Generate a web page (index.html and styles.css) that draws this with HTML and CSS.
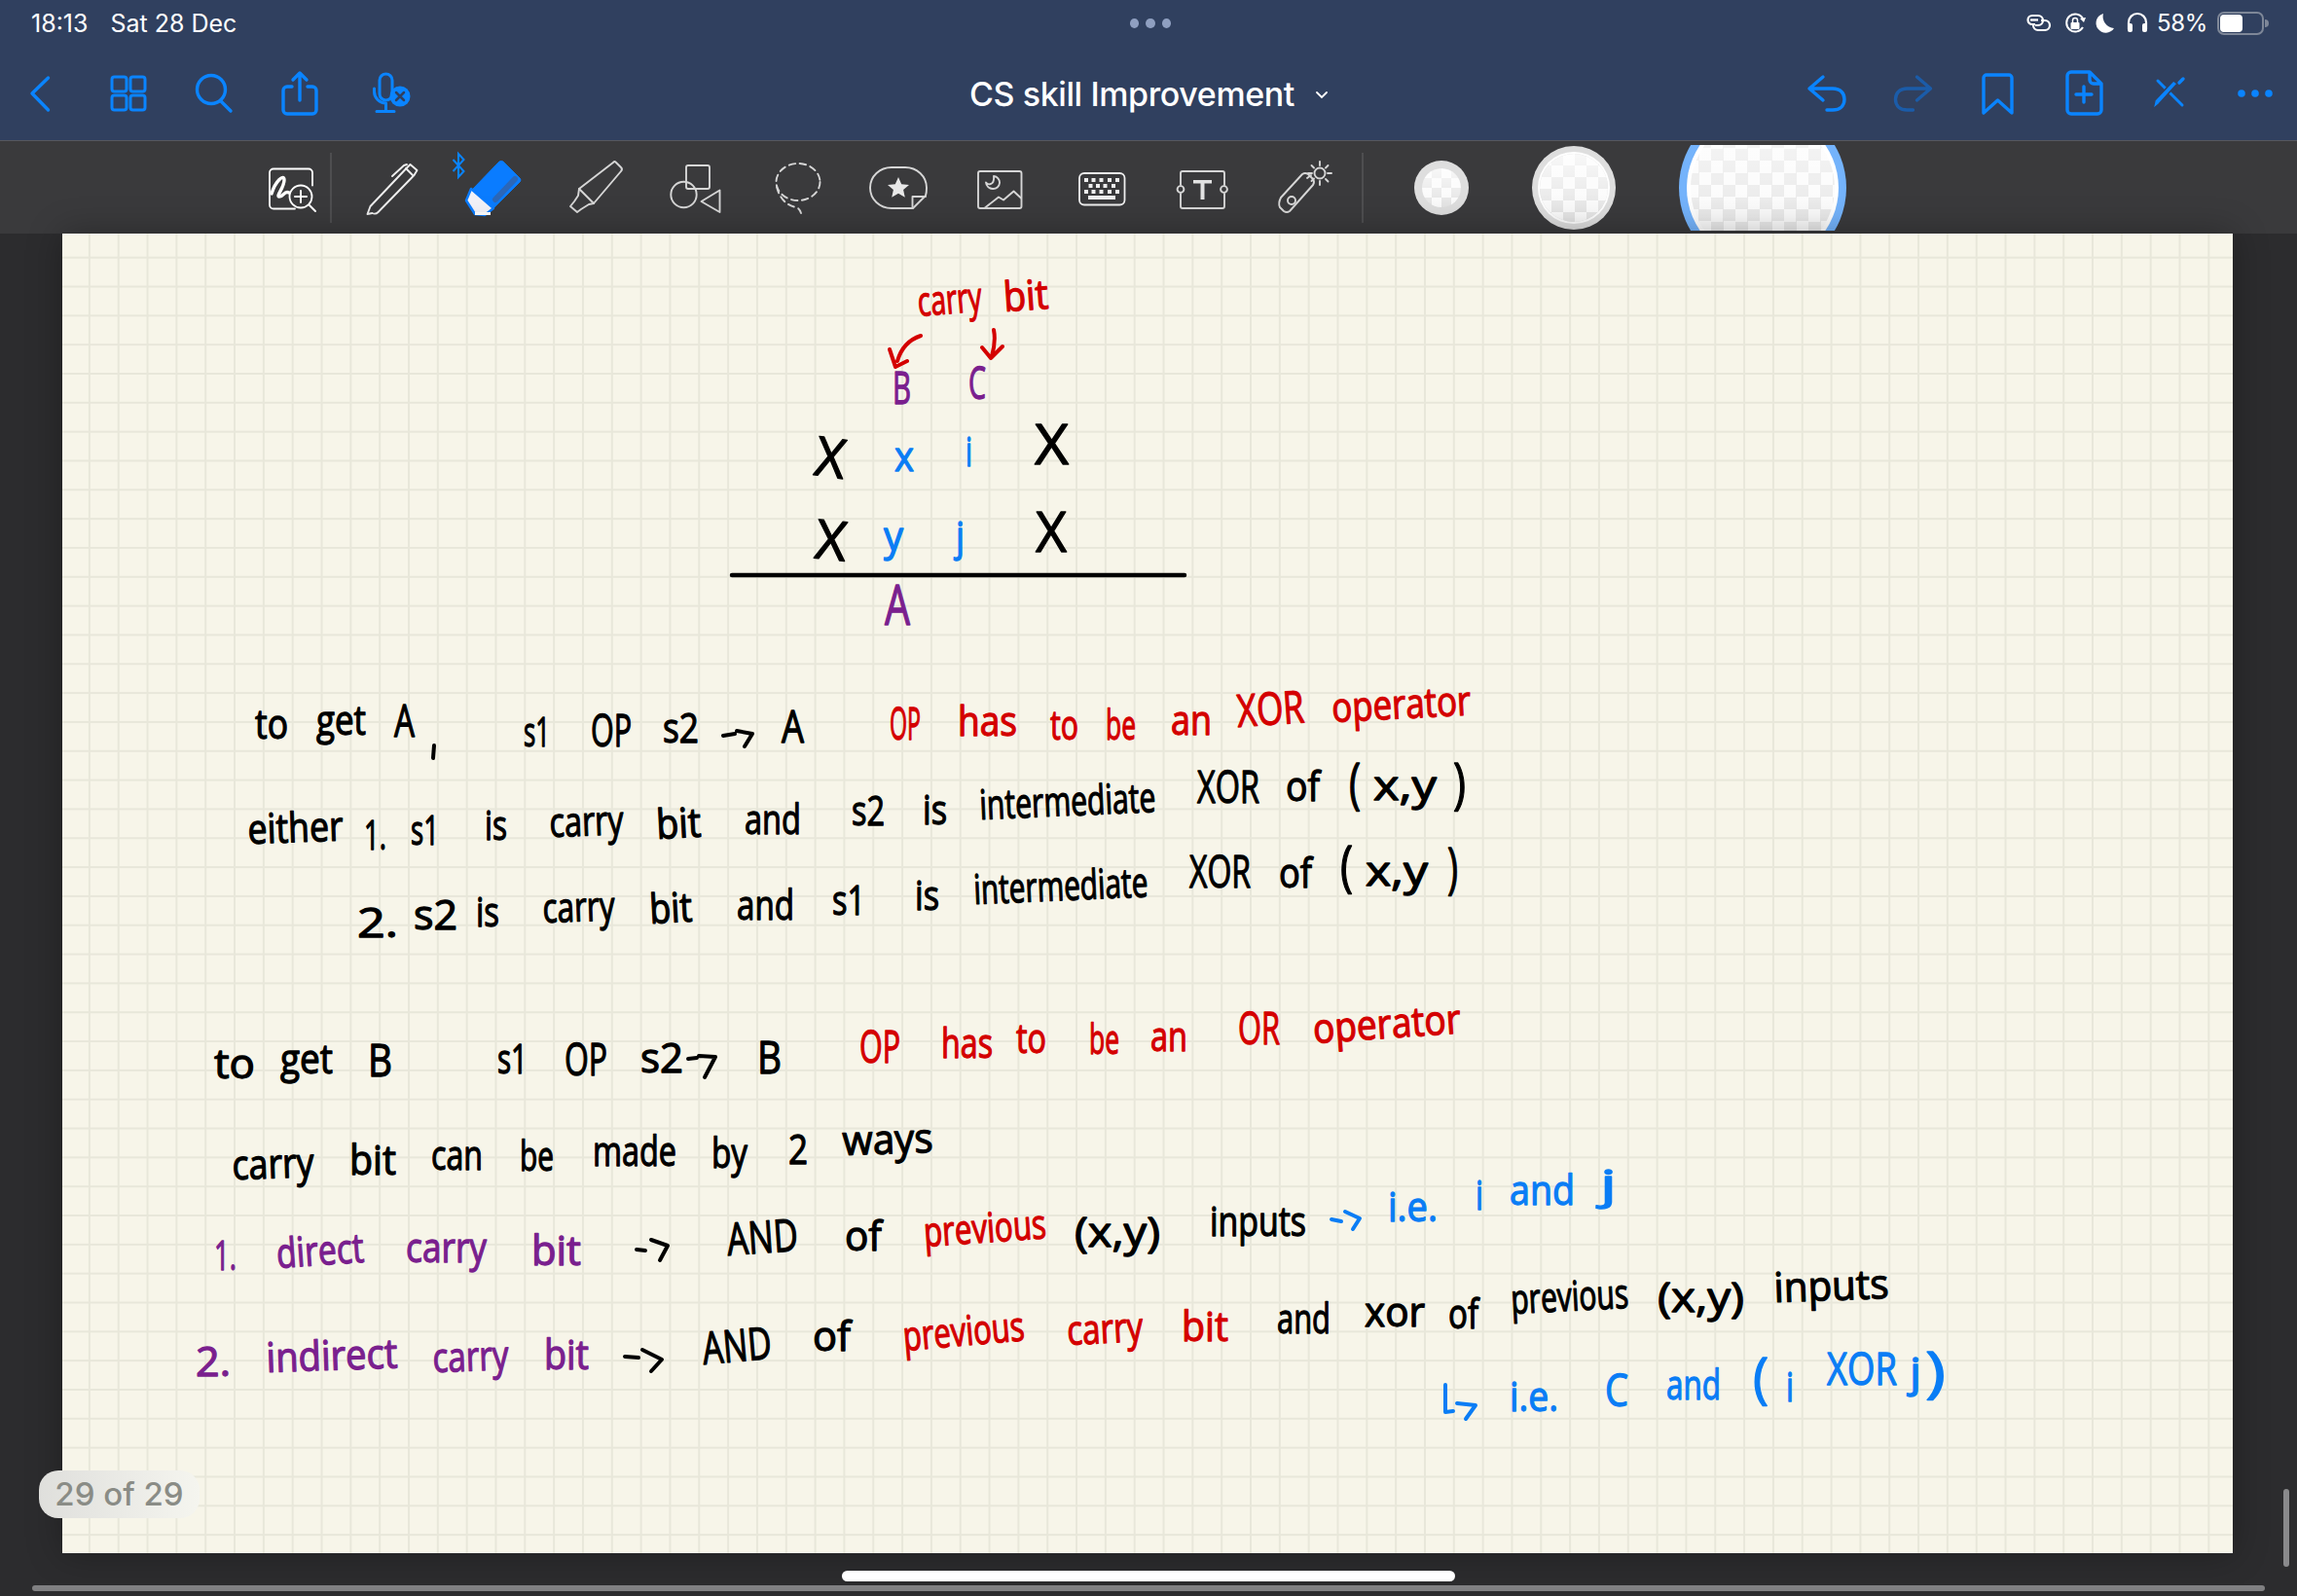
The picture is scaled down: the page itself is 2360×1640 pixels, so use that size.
FILE: index.html
```html
<!DOCTYPE html>
<html lang="en">
<head>
<meta charset="utf-8">
<title>CS skill Improvement</title>
<link rel="stylesheet" href="styles.css">
</head>
<body>
<div class="app">
  <header class="top">
    <div class="status">
      <div class="clock"><span>18:13</span><span>Sat 28 Dec</span></div>
      <div class="pager-dots"><i></i><i></i><i></i></div>
      <div class="sys">
        <svg class="st" width="32" height="24" viewBox="2080 12 32 24"><g fill="none" stroke="#fff" stroke-width="2.2"><path d="M2094 16h-6a4.5 4.5 0 0 0 0 9h3"/><path d="M2086 20.500h8a5 5 0 0 1 0 0"/><path d="M2097 21h4a5 5 0 0 1 0 10h-7a5 5 0 0 1-5-5"/><path d="M2094 16a5 5 0 0 1 5 5 5 5 0 0 1-5 5h-3"/></g></svg>
        <svg class="st" width="24" height="24" viewBox="2120 12 24 24"><g fill="none" stroke="#fff" stroke-width="2"><path d="M2140 28a9 9 0 1 1 0-9"/></g><path d="M2137 19l6-1-2 5z" fill="#fff"/><rect x="2127.500" y="23" width="9" height="7" rx="1" fill="#fff"/><path d="M2129.500 23v-2a2.500 2.500 0 0 1 5 0v2" fill="none" stroke="#fff" stroke-width="1.500"/></svg>
        <svg class="st" width="24" height="24" viewBox="2152 12 24 24"><path d="M2161 14a10 10 0 1 0 11 15 12 12 0 0 1-11-15z" fill="#fff"/></svg>
        <svg class="st" width="24" height="24" viewBox="2184 12 24 24"><path d="M2187 30v-7a9 9 0 0 1 18 0v7" fill="none" stroke="#fff" stroke-width="2.200"/><rect x="2186" y="24" width="5" height="9" rx="2" fill="#fff"/><rect x="2201" y="24" width="5" height="9" rx="2" fill="#fff"/></svg>
        <span class="pct">58%</span>
        <svg class="st" width="54" height="28" viewBox="2278 10 54 28"><rect x="2279" y="13" width="46" height="22" rx="6" fill="none" stroke="#7e8798" stroke-width="2"/><rect x="2281" y="15" width="23" height="18" rx="4" fill="#fff"/><path d="M2327 20a4 4 0 0 1 0 8z" fill="#7e8798"/></svg>
      </div>
    </div>
    <nav class="nav">
      <div class="nav-side">
        <svg class="ic" width="48" height="48" viewBox="18 72 48 48"><path d="M49.500 80L33 96l16.500 17" class="bl"/></svg>
        <svg class="ic" width="48" height="48" viewBox="108 72 48 48"><g class="bl thin"><rect x="115" y="79" width="15" height="15" rx="2.500"/><rect x="134" y="79" width="15" height="15" rx="2.500"/><rect x="115" y="98" width="15" height="15" rx="2.500"/><rect x="134" y="98" width="15" height="15" rx="2.500"/></g></svg>
        <svg class="ic" width="48" height="48" viewBox="198 72 48 48"><g class="bl"><circle cx="217" cy="92" r="14.500"/><path d="M227 104l10 10"/></g></svg>
        <svg class="ic" width="48" height="48" viewBox="288 72 48 48"><g class="bl"><path d="M300 89h-5a4 4 0 0 0-4 4v20a4 4 0 0 0 4 4h26a4 4 0 0 0 4-4V93a4 4 0 0 0-4-4h-5"/><path d="M308 103V76M301 82l7-7 7 7"/></g></svg>
        <svg class="ic" width="48" height="48" viewBox="378 72 48 48"><g class="bl thin"><rect x="390" y="76" width="13" height="27" rx="6.500"/><path d="M384.500 91v3a12 12 0 0 0 12 12M396.500 106v8M387 114.500h18"/></g><circle cx="411" cy="99" r="10.500" fill="#0a84ff"/><path d="M407 95l8 8M415 95l-8 8" stroke="#30405f" stroke-width="2.500" stroke-linecap="round"/></svg>
      </div>
      <div class="doc-title"><span>CS skill Improvement</span><svg width="12" height="8" viewBox="0 0 12 8"><path d="M1 1l5 5 5-5" fill="none" stroke="#fff" stroke-width="1.800" stroke-linecap="round"/></svg></div>
      <div class="nav-side end">
        <svg class="ic" width="48" height="48" viewBox="1853 72 48 48"><path class="bl" d="M1873 79l-14 12 14 12M1859 91h24c8 0 12 5 12 11 0 7-5 11-12 11h-6"/></svg>
        <svg class="ic" width="48" height="48" viewBox="1941 72 48 48"><path class="bl dim" d="M1969.500 79l14 12-14 12M1983.500 91h-24c-8 0-12 5-12 11 0 7 5 11 12 11h6"/></svg>
        <svg class="ic" width="48" height="48" viewBox="2029 72 48 48"><path class="bl" d="M2038 116V80a3 3 0 0 1 3-3h23a3 3 0 0 1 3 3v36l-14.500-13z"/></svg>
        <svg class="ic" width="48" height="48" viewBox="2117 72 48 48"><g class="bl"><path d="M2147 74h-19a4 4 0 0 0-4 4v35a4 4 0 0 0 4 4h27a4 4 0 0 0 4-4V86zM2147 74v8a4 4 0 0 0 4 4h8"/></g><path class="bl" d="M2141 89v16M2133 97h16"/></svg>
        <svg class="ic" width="48" height="48" viewBox="2205 72 48 48"><path class="bl thin" d="M2217 83l25 25"/><path d="M2212 112l2-9 19-20 4 3-19 21z" fill="#0a84ff" stroke="#30405f" stroke-width="1.500"/><path d="M2239 85l4-4" class="bl"/></svg>
        <svg class="ic" width="48" height="48" viewBox="2293 72 48 48"><g fill="#0a84ff"><circle cx="2303" cy="96" r="3.800"/><circle cx="2317" cy="96" r="3.800"/><circle cx="2331" cy="96" r="3.800"/></g></svg>
      </div>
    </nav>
  </header>

  <div class="toolbar">
    <svg class="zoomtool" width="88" height="95" viewBox="252 145 88 95">
      <g fill="none" stroke="#fff" stroke-width="1.800" stroke-linecap="round"><path d="M303 214.500h-22a4 4 0 0 1-4-4v-33a4 4 0 0 1 4-4h36a4 4 0 0 1 4 4v13"/><circle cx="309" cy="202" r="11.500" fill="#3a3a3c"/><path d="M318 211l6 6M309 196v12M303 202h12" stroke-width="2"/><path d="M279 199c4-13 13-21 13-14 0 8-9 17-5 17 5 0 5-7 10-4" stroke-width="3.400"/></g>
    </svg>
    <i class="tsep"></i>
    <div class="tools">
      <svg width="104" height="95" viewBox="351 145 104 95"><g class="tl w"><path d="M377.500 220l3-8 36-38 3-3 2-2 7 6-3 5-37 38c-2 2-4 2-6 1z"/><path d="M403 181l12-11 3-1"/><path d="M417 173l7 7"/></g></svg>
      <svg width="104" height="95" viewBox="455 145 104 95"><path d="M465.500 164l11 12-5.500 6v-24l5.500 6-11 12" fill="none" stroke="#0a84ff" stroke-width="2"/><path d="M484 194l23 20-9 7-10-1-9-14z" fill="#f2f2f8" stroke="#0a7cff" stroke-width="2.500" stroke-linejoin="round"/><path d="M513 166q2-1 4 0l17 17q2 2 0 4l-27 27-21-20z" fill="#0a7cff" stroke="#0a7cff" stroke-linejoin="round"/><path d="M509 205l20-21" stroke="#2b67b8" stroke-width="6" stroke-linecap="round"/><rect x="488" y="218" width="16" height="3" fill="#fff"/></svg>
      <svg width="104" height="95" viewBox="559 145 104 95"><g class="tl"><path d="M630 167q1-2 3 0l5 5q2 2 0 4l-28 33-5 1-8 5-4 3-7-6 4-5 4-6 1-7z"/><path d="M595 194l15 15"/></g></svg>
      <svg width="104" height="95" viewBox="663 145 104 95"><g class="tl"><rect x="705" y="170" width="24" height="24" rx="2"/><circle cx="702.500" cy="200" r="13.200"/><path d="M739.500 195.500v22.500l-19-11z"/></g></svg>
      <svg width="104" height="95" viewBox="767 145 104 95"><g class="tl dash"><ellipse cx="820" cy="187" rx="22.500" ry="19"/><path d="M798 192c3 12 10 19 20 21 3 1 4 3 5 6"/></g></svg>
      <svg width="104" height="95" viewBox="871 145 104 95"><g class="tl"><path d="M952 193c0-12-10-21-22-21h-14c-12 0-22 9-22 21s10 21 22 21h22l13-13c1-3 1-5 1-8z"/><path d="M937.500 214v-12h13.500"/></g><path d="M923 182l3.200 7.200 7.800.8-5.900 5.100 1.700 7.700-6.800-4-6.800 4 1.700-7.700-5.900-5.100 7.800-.8z" fill="#e8e8e8"/></svg>
      <svg width="104" height="95" viewBox="975 145 104 95"><g class="tl"><rect x="1005" y="176" width="44.500" height="38" rx="2"/><path d="M1012 213.500l14-11 5 3 10.500-9 7.500 7"/><path d="M1021 181a6.500 6.500 0 1 1-1 13 7 7 0 0 1-7-6.500c2 3 9 3 8-6.500z"/></g></svg>
      <svg width="104" height="95" viewBox="1079 145 104 95"><rect x="1109" y="178" width="46.500" height="32.500" rx="5" fill="none" stroke="#eee" stroke-width="1.800"/><g fill="#eee"><rect x="1114" y="183" width="4" height="4"/><rect x="1121.500" y="183" width="4" height="4"/><rect x="1129.500" y="183" width="4" height="4"/><rect x="1138" y="183" width="4" height="4"/><rect x="1146" y="183" width="4" height="4"/><rect x="1118.500" y="189" width="4" height="4"/><rect x="1126" y="189" width="4" height="4"/><rect x="1133.500" y="189" width="4" height="4"/><rect x="1142" y="189" width="4" height="4"/><rect x="1114" y="195" width="4" height="4"/><rect x="1121.500" y="195" width="4" height="4"/><rect x="1129.500" y="195" width="4" height="4"/><rect x="1138" y="195" width="4" height="4"/><rect x="1146" y="195" width="4" height="4"/><rect x="1118" y="201" width="28" height="4"/></g></svg>
      <svg width="104" height="95" viewBox="1183 145 104 95"><g class="tl"><path d="M1213 190v-12a2 2 0 0 1 2-2h41a2 2 0 0 1 2 2v12M1213 199v13a2 2 0 0 0 2 2h41a2 2 0 0 0 2-2v-13"/><circle cx="1213" cy="194.500" r="3.400"/><circle cx="1257.500" cy="194.500" r="3.400"/></g><path d="M1226 185h19v3.500h-7.500V205h-4V188.500H1226z" fill="#e2e2e2"/></svg>
      <svg width="104" height="95" viewBox="1287 145 104 95"><g class="tl"><path d="M1316 203l22-24q3-2 6 0l5 5q2 3 0 6l-24 27q-3 2-6 0l-4-4q-2-4 1-10z"/><circle cx="1327" cy="206" r="4"/><path d="M1343 183l4-3"/><circle cx="1356" cy="178" r="5.500"/><path d="M1356 166v4M1356 186v4M1344 178h4M1364 178h4M1347.500 170l2.500 2.500M1362 184l2.500 2.500M1364.500 170l-2.500 2.500M1347.500 186l2.500-2.500"/></g></svg>
    </div>
    <i class="tsep late"></i>
    <div class="swatch s1"><b></b></div>
    <div class="swatch s2"><b></b></div>
    <div class="swatch-clip"><div class="swatch s3"><b></b></div></div>
  </div>

  <main class="canvas">
    <section class="page">
      <svg class="ink" viewBox="64 240 2230 1356" xmlns="http://www.w3.org/2000/svg">
        <!-- carry diagram -->
        <text class="r" x="944" y="325" textLength="66" lengthAdjust="spacingAndGlyphs" transform="rotate(-5 944 325)">carry</text>
        <text class="r" x="1032" y="320" textLength="46" lengthAdjust="spacingAndGlyphs" transform="rotate(-4 1032 320)">bit</text>
        <g class="pen pr"><path d="M946 345c-12 4-20 12-24 26M914 359l6 18 12-6M1021 339c2 10 0 20-2 27M1009 357l9 11 12-12"/></g>
        <text class="p c" x="917" y="415" textLength="19" lengthAdjust="spacingAndGlyphs">B</text>
        <text class="p c" x="995" y="410" textLength="18" lengthAdjust="spacingAndGlyphs">C</text>
        <text class="k xl" x="838" y="490" textLength="31" lengthAdjust="spacingAndGlyphs" transform="rotate(8 853 470)">X</text>
        <text class="b" x="919" y="484" textLength="20" lengthAdjust="spacingAndGlyphs">x</text>
        <text class="b" x="992" y="479" textLength="7" lengthAdjust="spacingAndGlyphs">i</text>
        <text class="k xl" x="1063" y="477" textLength="35" lengthAdjust="spacingAndGlyphs">X</text>
        <text class="k xl" x="838" y="575" textLength="32" lengthAdjust="spacingAndGlyphs" transform="rotate(6 853 555)">X</text>
        <text class="b" x="908" y="566" textLength="20" lengthAdjust="spacingAndGlyphs">y</text>
        <text class="b" x="982" y="566" textLength="9" lengthAdjust="spacingAndGlyphs">j</text>
        <text class="k xl" x="1064" y="567" textLength="32" lengthAdjust="spacingAndGlyphs">X</text>
        <path class="rule" d="M752 591h465"/>
        <text class="p xl" x="909" y="642" textLength="26" lengthAdjust="spacingAndGlyphs">A</text>

        <!-- line 1 -->
        <text class="k" x="262" y="759" textLength="34" lengthAdjust="spacingAndGlyphs">to</text>
        <text class="k" x="325" y="755" textLength="51" lengthAdjust="spacingAndGlyphs">get</text>
        <text class="k c" x="405" y="757" textLength="21" lengthAdjust="spacingAndGlyphs">A</text>
        <path class="pen pk" d="M446 766l-1 13"/>
        <text class="k" x="538" y="767" textLength="27" lengthAdjust="spacingAndGlyphs">s1</text>
        <text class="k c" x="607" y="767" textLength="42" lengthAdjust="spacingAndGlyphs">OP</text>
        <text class="k" x="681" y="763" textLength="37" lengthAdjust="spacingAndGlyphs">s2</text>
        <path class="pen pk" d="M743 756l12-2M757 751l16 3-8 13"/>
        <text class="k c" x="803" y="763" textLength="23" lengthAdjust="spacingAndGlyphs">A</text>
        <text class="r c" x="914" y="760" textLength="32" lengthAdjust="spacingAndGlyphs">OP</text>
        <text class="r" x="984" y="756" textLength="61" lengthAdjust="spacingAndGlyphs">has</text>
        <text class="r" x="1079" y="760" textLength="29" lengthAdjust="spacingAndGlyphs">to</text>
        <text class="r" x="1136" y="760" textLength="31" lengthAdjust="spacingAndGlyphs">be</text>
        <text class="r" x="1203" y="755" textLength="42" lengthAdjust="spacingAndGlyphs">an</text>
        <text class="r c" x="1272" y="747" textLength="69" lengthAdjust="spacingAndGlyphs" transform="rotate(-4 1272 747)">XOR</text>
        <text class="r" x="1369" y="742" textLength="143" lengthAdjust="spacingAndGlyphs" transform="rotate(-3 1369 742)">operator</text>

        <!-- line 2 -->
        <text class="k" x="255" y="867" textLength="98" lengthAdjust="spacingAndGlyphs" transform="rotate(-2 255 867)">either</text>
        <text class="k" x="374" y="873" textLength="23" lengthAdjust="spacingAndGlyphs">1.</text>
        <text class="k" x="422" y="868" textLength="29" lengthAdjust="spacingAndGlyphs">s1</text>
        <text class="k" x="498" y="863" textLength="23" lengthAdjust="spacingAndGlyphs">is</text>
        <text class="k" x="565" y="860" textLength="76" lengthAdjust="spacingAndGlyphs" transform="rotate(-2 565 860)">carry</text>
        <text class="k" x="675" y="862" textLength="46" lengthAdjust="spacingAndGlyphs" transform="rotate(-3 675 862)">bit</text>
        <text class="k" x="765" y="857" textLength="58" lengthAdjust="spacingAndGlyphs">and</text>
        <text class="k" x="875" y="848" textLength="34" lengthAdjust="spacingAndGlyphs">s2</text>
        <text class="k" x="948" y="847" textLength="25" lengthAdjust="spacingAndGlyphs">is</text>
        <text class="k" x="1007" y="842" textLength="181" lengthAdjust="spacingAndGlyphs" transform="rotate(-2.500 1007 842)">intermediate</text>
        <text class="k c" x="1230" y="825" textLength="64" lengthAdjust="spacingAndGlyphs">XOR</text>
        <text class="k" x="1321" y="823" textLength="35" lengthAdjust="spacingAndGlyphs">of</text>
        <text class="k xl" x="1386" y="825" textLength="12" lengthAdjust="spacingAndGlyphs">(</text>
        <text class="k" x="1411" y="822" textLength="65" lengthAdjust="spacingAndGlyphs">x,y</text>
        <text class="k xl" x="1493" y="825" textLength="13" lengthAdjust="spacingAndGlyphs">)</text>

        <!-- line 3 -->
        <text class="k" x="367" y="963" textLength="42" lengthAdjust="spacingAndGlyphs">2.</text>
        <text class="k" x="425" y="955" textLength="45" lengthAdjust="spacingAndGlyphs">s2</text>
        <text class="k" x="489" y="952" textLength="24" lengthAdjust="spacingAndGlyphs">is</text>
        <text class="k" x="558" y="948" textLength="74" lengthAdjust="spacingAndGlyphs" transform="rotate(-2 558 948)">carry</text>
        <text class="k" x="668" y="949" textLength="44" lengthAdjust="spacingAndGlyphs" transform="rotate(-3 668 949)">bit</text>
        <text class="k" x="757" y="945" textLength="59" lengthAdjust="spacingAndGlyphs">and</text>
        <text class="k" x="855" y="940" textLength="34" lengthAdjust="spacingAndGlyphs">s1</text>
        <text class="k" x="940" y="935" textLength="25" lengthAdjust="spacingAndGlyphs">is</text>
        <text class="k" x="1001" y="929" textLength="179" lengthAdjust="spacingAndGlyphs" transform="rotate(-2.500 1001 929)">intermediate</text>
        <text class="k c" x="1222" y="912" textLength="63" lengthAdjust="spacingAndGlyphs">XOR</text>
        <text class="k" x="1314" y="912" textLength="34" lengthAdjust="spacingAndGlyphs">of</text>
        <text class="k xl" x="1377" y="910" textLength="13" lengthAdjust="spacingAndGlyphs">(</text>
        <text class="k" x="1403" y="910" textLength="64" lengthAdjust="spacingAndGlyphs">x,y</text>
        <text class="k xl" x="1487" y="912" textLength="11" lengthAdjust="spacingAndGlyphs">)</text>

        <!-- line 4 -->
        <text class="k" x="220" y="1108" textLength="42" lengthAdjust="spacingAndGlyphs">to</text>
        <text class="k" x="288" y="1103" textLength="54" lengthAdjust="spacingAndGlyphs">get</text>
        <text class="k c" x="378" y="1106" textLength="25" lengthAdjust="spacingAndGlyphs">B</text>
        <text class="k" x="511" y="1103" textLength="31" lengthAdjust="spacingAndGlyphs">s1</text>
        <text class="k c" x="580" y="1105" textLength="44" lengthAdjust="spacingAndGlyphs">OP</text>
        <text class="k" x="658" y="1102" textLength="44" lengthAdjust="spacingAndGlyphs">s2</text>
        <path class="pen pk" d="M707 1088l9-1M718 1085l17 1-11 21"/>
        <text class="k c" x="778" y="1103" textLength="25" lengthAdjust="spacingAndGlyphs">B</text>
        <text class="r c" x="883" y="1092" textLength="42" lengthAdjust="spacingAndGlyphs">OP</text>
        <text class="r" x="967" y="1087" textLength="53" lengthAdjust="spacingAndGlyphs">has</text>
        <text class="r" x="1044" y="1082" textLength="31" lengthAdjust="spacingAndGlyphs">to</text>
        <text class="r" x="1119" y="1083" textLength="31" lengthAdjust="spacingAndGlyphs">be</text>
        <text class="r" x="1182" y="1080" textLength="38" lengthAdjust="spacingAndGlyphs">an</text>
        <text class="r c" x="1272" y="1073" textLength="43" lengthAdjust="spacingAndGlyphs">OR</text>
        <text class="r" x="1350" y="1072" textLength="152" lengthAdjust="spacingAndGlyphs" transform="rotate(-4 1350 1072)">operator</text>

        <!-- line 5 -->
        <text class="k" x="239" y="1212" textLength="84" lengthAdjust="spacingAndGlyphs" transform="rotate(-2 239 1212)">carry</text>
        <text class="k" x="359" y="1207" textLength="48" lengthAdjust="spacingAndGlyphs">bit</text>
        <text class="k" x="443" y="1202" textLength="53" lengthAdjust="spacingAndGlyphs">can</text>
        <text class="k" x="534" y="1203" textLength="35" lengthAdjust="spacingAndGlyphs">be</text>
        <text class="k" x="609" y="1198" textLength="86" lengthAdjust="spacingAndGlyphs">made</text>
        <text class="k" x="731" y="1200" textLength="37" lengthAdjust="spacingAndGlyphs">by</text>
        <text class="k" x="810" y="1196" textLength="20" lengthAdjust="spacingAndGlyphs">2</text>
        <text class="k" x="866" y="1187" textLength="93" lengthAdjust="spacingAndGlyphs" transform="rotate(-2 866 1187)">ways</text>

        <!-- line 6 -->
        <text class="p" x="220" y="1305" textLength="23" lengthAdjust="spacingAndGlyphs">1.</text>
        <text class="p" x="285" y="1303" textLength="90" lengthAdjust="spacingAndGlyphs" transform="rotate(-4 285 1303)">direct</text>
        <text class="p" x="417" y="1297" textLength="83" lengthAdjust="spacingAndGlyphs">carry</text>
        <text class="p" x="546" y="1300" textLength="51" lengthAdjust="spacingAndGlyphs">bit</text>
        <path class="pen pk" d="M654 1284l9 1M669 1274l17 6-8 15"/>
        <text class="k c" x="748" y="1290" textLength="73" lengthAdjust="spacingAndGlyphs" transform="rotate(-4 748 1290)">AND</text>
        <text class="k" x="868" y="1285" textLength="38" lengthAdjust="spacingAndGlyphs">of</text>
        <text class="r" x="950" y="1281" textLength="126" lengthAdjust="spacingAndGlyphs" transform="rotate(-4 950 1281)">previous</text>
        <text class="k" x="1104" y="1281" textLength="88" lengthAdjust="spacingAndGlyphs">(x,y)</text>
        <text class="k" x="1243" y="1270" textLength="99" lengthAdjust="spacingAndGlyphs">inputs</text>
        <path class="pen pb" d="M1368 1253l10 2M1382 1245l15 7-7 11"/>
        <text class="b" x="1426" y="1255" textLength="51" lengthAdjust="spacingAndGlyphs">i.e.</text>
        <text class="b" x="1516" y="1243" textLength="8" lengthAdjust="spacingAndGlyphs">i</text>
        <text class="b" x="1551" y="1238" textLength="67" lengthAdjust="spacingAndGlyphs">and</text>
        <text class="b" x="1644" y="1232" textLength="17" lengthAdjust="spacingAndGlyphs">j</text>

        <!-- line 7 -->
        <text class="p" x="201" y="1414" textLength="36" lengthAdjust="spacingAndGlyphs">2.</text>
        <text class="p" x="274" y="1410" textLength="135" lengthAdjust="spacingAndGlyphs" transform="rotate(-2 274 1410)">indirect</text>
        <text class="p" x="445" y="1410" textLength="78" lengthAdjust="spacingAndGlyphs" transform="rotate(-2 445 1410)">carry</text>
        <text class="p" x="559" y="1407" textLength="46" lengthAdjust="spacingAndGlyphs">bit</text>
        <path class="pen pk" d="M642 1394l14 1M660 1387l20 10-11 12"/>
        <text class="k c" x="723" y="1402" textLength="71" lengthAdjust="spacingAndGlyphs" transform="rotate(-5 723 1402)">AND</text>
        <text class="k" x="835" y="1388" textLength="39" lengthAdjust="spacingAndGlyphs">of</text>
        <text class="r" x="929" y="1388" textLength="125" lengthAdjust="spacingAndGlyphs" transform="rotate(-5 929 1388)">previous</text>
        <text class="r" x="1097" y="1382" textLength="78" lengthAdjust="spacingAndGlyphs" transform="rotate(-3 1097 1382)">carry</text>
        <text class="r" x="1214" y="1378" textLength="48" lengthAdjust="spacingAndGlyphs">bit</text>
        <text class="k" x="1312" y="1370" textLength="55" lengthAdjust="spacingAndGlyphs">and</text>
        <text class="k" x="1402" y="1363" textLength="62" lengthAdjust="spacingAndGlyphs">xor</text>
        <text class="k" x="1488" y="1365" textLength="31" lengthAdjust="spacingAndGlyphs">of</text>
        <text class="k" x="1553" y="1350" textLength="121" lengthAdjust="spacingAndGlyphs" transform="rotate(-3 1553 1350)">previous</text>
        <text class="k" x="1703" y="1348" textLength="89" lengthAdjust="spacingAndGlyphs">(x,y)</text>
        <text class="k" x="1823" y="1338" textLength="118" lengthAdjust="spacingAndGlyphs" transform="rotate(-2 1823 1338)">inputs</text>

        <!-- line 8 -->
        <path class="pen pb" d="M1485 1423v28l8-1M1497 1442l19 2-10 14"/>
        <text class="b" x="1551" y="1450" textLength="50" lengthAdjust="spacingAndGlyphs">i.e.</text>
        <text class="b c" x="1649" y="1445" textLength="24" lengthAdjust="spacingAndGlyphs">C</text>
        <text class="b" x="1712" y="1438" textLength="56" lengthAdjust="spacingAndGlyphs">and</text>
        <text class="b xl" x="1801" y="1436" textLength="16" lengthAdjust="spacingAndGlyphs">(</text>
        <text class="b" x="1835" y="1440" textLength="8" lengthAdjust="spacingAndGlyphs">i</text>
        <text class="b c" x="1877" y="1423" textLength="72" lengthAdjust="spacingAndGlyphs">XOR</text>
        <text class="b" x="1962" y="1425" textLength="12" lengthAdjust="spacingAndGlyphs">j</text>
        <text class="b xl" x="1978" y="1430" textLength="21" lengthAdjust="spacingAndGlyphs">)</text>
      </svg>
    </section>
    <div class="badge">29 of 29</div>
    <i class="scroll-h"></i>
    <i class="scroll-v"></i>
    <i class="home"></i>
  </main>
</div>
</body>
</html>
```
FILE: styles.css
```css
* { box-sizing: border-box; }
html, body { margin: 0; padding: 0; background: #2c2c2e; }
.app {
  width: 2360px; height: 1640px; display: flex; flex-direction: column;
  overflow: hidden; font-family: Inter, "Liberation Sans", sans-serif; color: #fff;
}
.top { height: 145px; background: #30405f; border-bottom: 1px solid #56585e; flex: none; }
.status {
  height: 48px; padding: 0 28px 0 32px; display: grid;
  grid-template-columns: 1fr auto 1fr; align-items: center;
  font-size: 25px; line-height: 48px;
}
.clock { display: flex; gap: 23px; }
.pager-dots { display: flex; gap: 7px; }
.pager-dots i { width: 9.500px; height: 10px; border-radius: 50%; background: #8f9fc0; }
.sys { display: flex; justify-content: flex-end; align-items: center; gap: 8px; }
.st { display: block; }
.pct { width: 54px; font-size: 24px; letter-spacing: -0.4px; }
.nav {
  height: 96px; display: grid; grid-template-columns: 1fr auto 1fr; align-items: center;
}
.nav-side { display: flex; gap: 42px; padding-left: 18px; }
.nav-side.end { gap: 40px; padding: 0 19px 0 0; justify-content: flex-end; }
.ic { display: block; }
.bl, .bl rect, .bl circle, .bl path {
  fill: none; stroke: #0a84ff; stroke-width: 3.400; stroke-linecap: round; stroke-linejoin: round;
}
.thin, .thin rect, .thin path { stroke-width: 3; }
.dim { stroke: #1b5ca9; }
.doc-title { display: flex; align-items: center; gap: 22px; font-size: 34px; font-weight: 500; letter-spacing: -0.4px; }
.doc-title svg { display: block; margin-top: 4px; }

.toolbar {
  height: 95px; flex: none; background: #3a3a3c; display: flex; align-items: center; padding-left: 252px;
}
.zoomtool { display: block; flex: none; }
.tsep { width: 2px; height: 72px; background: #4e4e50; flex: none; margin-left: -1px; }
.tsep.late { margin: 0 0 0 8px; }
.tools { display: flex; margin-left: 10px; }
.tools svg { display: block; flex: none; }
.tl, .tl rect, .tl circle, .tl path, .tl ellipse {
  fill: none; stroke: #d6d6d6; stroke-width: 1.900; stroke-linecap: round; stroke-linejoin: round;
}
.tl.w path { stroke: #eeeeee; }
.dash ellipse, .dash path { stroke-dasharray: 6.500 4.500; }

.swatch {
  border-radius: 50%; background: #dedede; padding: 8px; flex: none;
}
.swatch b {
  display: block; width: 100%; height: 100%; border-radius: 50%;
  background:
    linear-gradient(rgba(255,255,255,.75), rgba(255,255,255,.05)),
    repeating-conic-gradient(#e2e2e2 0 25%, #fafafa 0 50%) 0 0 / 20px 20px;
}
.s1 { width: 56px; height: 56px; margin-left: 52px; }
.s2 { width: 86px; height: 86px; margin-left: 65px; }
.s2 b { background-size: 100% 100%, 24px 24px; box-shadow: 0 0 0 2px #fff; }
.swatch-clip { width: 172px; height: 88px; margin-left: 65px; overflow: hidden; position: relative; flex: none; }
.s3 {
  width: 172px; height: 172px; margin-top: -42px; padding: 8px; background: #74b3fb;
}
.s3 b { background-size: 100% 100%, 25px 25px; box-shadow: inset 0 0 0 4px #fff; }

.canvas {
  flex: 1; position: relative; padding-left: 64px; background: #2c2c2e;
}
.page {
  width: 2230px; height: 1356px; position: relative;
  box-shadow: 0 0 34px rgba(0,0,0,.3);
  background-color: #f7f5e9;
  background-image:
    linear-gradient(90deg, #e8e7da 1.600px, transparent 1.600px),
    linear-gradient(#e8e7da 1.600px, transparent 1.600px);
  background-size: 29.830px 29.830px;
  background-position: 26.900px 23.700px;
}
.ink {
  display: block; width: 100%; height: 100%;
  font-family: "Open Sans", "Liberation Sans", sans-serif;
}
.ink text { font-size: 42px; stroke-width: 1.300; stroke-linejoin: round; }
.ink text.c { font-size: 46px; }
.ink text.xl { font-size: 56px; }
.k { fill: #000; stroke: #000; }
.r { fill: #d40000; stroke: #d40000; }
.b { fill: #0a7df5; stroke: #0a7df5; }
.p { fill: #7a1f8e; stroke: #7a1f8e; }
.pen path, path.pen { fill: none; stroke-width: 4; stroke-linecap: round; stroke-linejoin: round; }
.pr { stroke: #d40000; }
.pk { stroke: #000; }
.pb { stroke: #0a7df5; }
.rule { fill: none; stroke: #000; stroke-width: 4.500; stroke-linecap: round; }

.badge {
  position: absolute; left: 40px; top: 1271px; width: 165px; height: 49px;
  border-radius: 20px; background: linear-gradient(90deg, #dfdfdc, #f5f5ef);
  color: #8a8c86; font-size: 33px; font-weight: 500; line-height: 49px; text-align: center;
}
.scroll-h {
  position: absolute; left: 33px; top: 1389px; width: 2294px; height: 6px;
  border-radius: 3px; background: #808082;
}
.scroll-v {
  position: absolute; left: 2346px; top: 1290px; width: 6px; height: 80px;
  border-radius: 3px; background: #8a8a8c;
}
.home {
  position: absolute; left: 865px; top: 1374px; width: 630px; height: 11px;
  border-radius: 6px; background: #fff;
}
```
